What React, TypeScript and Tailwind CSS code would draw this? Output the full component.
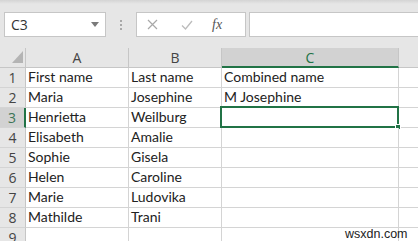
import React from "react";

const rows: string[][] = [
  ["First name", "Last name", "Combined name"],
  ["Maria", "Josephine", "M Josephine"],
  ["Henrietta", "Weilburg", ""],
  ["Elisabeth", "Amalie", ""],
  ["Sophie", "Gisela", ""],
  ["Helen", "Caroline", ""],
  ["Marie", "Ludovika", ""],
  ["Mathilde", "Trani", ""],
  ["", "", ""],
];

const cellFont = { fontFamily: "Lato, 'Noto Sans', sans-serif" };

export default function App() {
  return (
    <div
      className="relative w-[418px] h-[241px] overflow-hidden bg-[#e6e6e6] text-[#222]"
      style={cellFont}
    >
      <div className="h-[4px] bg-gradient-to-b from-[#d4d4d4] to-[#e6e6e6]" />
      {/* formula bar */}
      <div className="flex items-stretch h-[25px] mt-[8px]">
        <div className="ml-[4px] w-[102px] bg-white border border-[#c6c6c6] flex items-center justify-between pl-[6px] pr-[6px]">
          <span className="text-[14px] text-[#333]" style={{ fontFamily: "'Open Sans', sans-serif" }}>C3</span>
          <svg width="8" height="5" viewBox="0 0 8 5">
            <path d="M0 0 L8 0 L4 5 Z" fill="#7a7a7a" />
          </svg>
        </div>
        <div className="w-[30px] flex flex-col items-center justify-center gap-[2px]">
          <div className="w-[2px] h-[2px] bg-[#a8a8a8]" />
          <div className="w-[2px] h-[2px] bg-[#a8a8a8]" />
          <div className="w-[2px] h-[2px] bg-[#a8a8a8]" />
        </div>
        <div className="w-[110px] bg-white border border-[#c6c6c6] flex items-center relative">
          <svg className="ml-[10px]" width="11" height="11" viewBox="0 0 11 11">
            <path d="M1 1 L10 10 M10 1 L1 10" stroke="#a8a8a8" strokeWidth="1.2" />
          </svg>
          <svg className="ml-[23px]" width="12" height="10" viewBox="0 0 12 10">
            <path d="M1 5.5 L4.5 9 L11 1" stroke="#bcbcbc" strokeWidth="1.3" fill="none" />
          </svg>
          <span
            className="ml-[19px] text-[14px] italic text-[#555]"
            style={{ fontFamily: "'Liberation Serif', serif" }}
          >
            fx
          </span>
        </div>
        <div className="ml-[3px] flex-1 -mr-[2px] bg-white border border-[#c6c6c6]" />
      </div>
      {/* grid */}
      <div className="mt-[11px] grid grid-cols-[26px_103px_93px_177px_1fr]">
        <div className="h-[20px] border-r border-b border-[#c6c6c6] relative">
          <svg className="absolute left-[12px] top-[3px]" width="11" height="12" viewBox="0 0 11 12">
            <path d="M11 0 L11 12 L0 12 Z" fill="#b4b4b4" />
          </svg>
        </div>
        {["A", "B"].map((c) => (
          <div
            key={c}
            className="h-[20px] border-r border-b border-[#c6c6c6] flex items-center justify-center text-[14px] text-[#444]"
            style={{ fontFamily: "'Open Sans', sans-serif" }}
          >
            {c}
          </div>
        ))}
        <div
          className="h-[20px] bg-[#d2d2d2] border-r border-[#c6c6c6] border-b-2 border-b-[#217346] flex items-center justify-center text-[14px] text-[#217346]"
          style={{ fontFamily: "'Open Sans', sans-serif" }}
        >
          C
        </div>
        <div className="h-[20px] border-b border-[#c6c6c6]" />
        {rows.map((r, i) => {
          const n = i + 1;
          const sel = n === 3;
          return (
            <React.Fragment key={n}>
              <div
                className={
                  "h-[20px] border-b border-[#d4d4d4] flex items-center justify-center text-[14px] " +
                  (sel
                    ? "bg-[#d2d2d2] border-r-2 border-r-[#217346] text-[#3d7556]"
                    : "border-r border-r-[#c6c6c6] text-[#444]")
                }
                style={{ fontFamily: "'Open Sans', sans-serif" }}
              >
                {n}
              </div>
              {r.map((t, j) => (
                <div
                  key={j}
                  className="relative h-[20px] bg-white border-r border-b border-[#d4d4d4] flex items-end pl-[2px] pb-[1px] text-[14px] leading-[18px] whitespace-nowrap"
                >
                  {t}
                  {sel && j === 2 && (
                    <>
                      <div className="absolute -left-[2px] -top-[2px] -right-[1px] -bottom-[1px] border-2 border-[#217346]" />
                      <div className="absolute -right-[3px] -bottom-[3px] w-[6px] h-[6px] bg-[#217346] border border-white" />
                    </>
                  )}
                </div>
              ))}
              <div className="h-[20px] bg-white border-b border-[#d4d4d4]" />
            </React.Fragment>
          );
        })}
      </div>
      <div
        className="absolute left-[345px] top-[225px] text-[12.5px] text-[#222]"
        style={{ fontFamily: "'Liberation Sans', Arial, sans-serif" }}
      >
        wsxdn.com
      </div>
    </div>
  );
}
